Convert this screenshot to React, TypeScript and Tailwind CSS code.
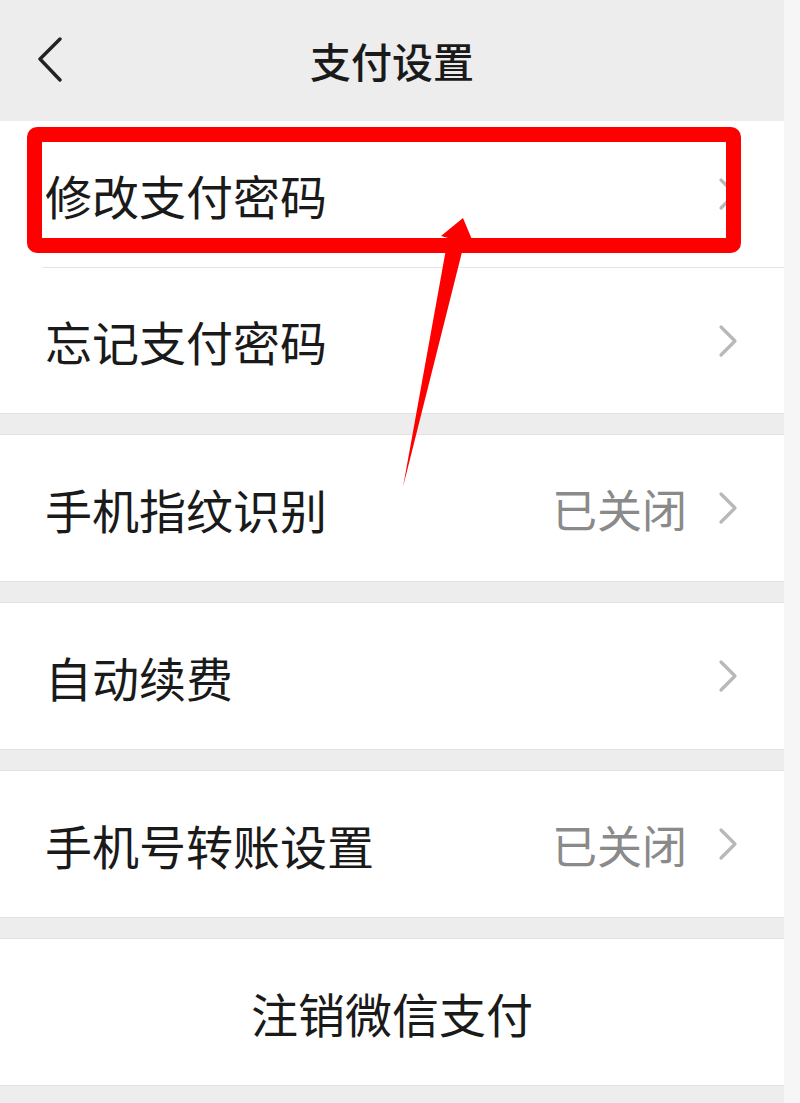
const FONT = { fontFamily: '"Noto Sans CJK SC", "Noto Sans", sans-serif' };

function Chevron() {
  return (
    <svg width="20" height="34" viewBox="0 0 20 34" className="shrink-0">
      <path d="M3 3 L17 17 L3 31" fill="none" stroke="#b8b8b8" strokeWidth="3.2" strokeLinecap="round" strokeLinejoin="round" />
    </svg>
  );
}

function Row({ label, value, arrow = true }: { label: string; value?: string; arrow?: boolean }) {
  return (
    <div className="flex h-[146px] items-center bg-white pl-[45px] pr-[46px]">
      <span className="flex-1 text-[47px] leading-none text-[#1a1a1a]">{label}</span>
      {value && <span className="mr-[31px] text-[45px] leading-none text-[#8a8a8a]">{value}</span>}
      {arrow && <Chevron />}
    </div>
  );
}

function Gap() {
  return <div className="h-[22px] border-y border-[#e2e2e2] bg-[#ededed]" />;
}

export default function App() {
  return (
    <div className="flex min-h-[1103px] w-[800px] bg-[#f6f6f6]" style={FONT}>
      <div className="relative w-[784px] bg-[#ededed]">
        <header className="relative flex h-[121px] items-center justify-center">
          <svg width="30" height="50" viewBox="0 0 30 50" className="absolute left-[32px] top-[34px]">
            <path d="M28 5 L8 25 L28 46" fill="none" stroke="#222" strokeWidth="3.4" strokeLinecap="round" strokeLinejoin="round" />
          </svg>
          <h1 className="text-[41px] font-medium leading-none text-[#1a1a1a]">支付设置</h1>
        </header>

        <div className="bg-white">
          <Row label="修改支付密码" />
          <div className="ml-[42px] h-px bg-[#e5e5e5]" />
          <div className="h-[145px] flex items-center bg-white pl-[45px] pr-[46px]">
            <span className="flex-1 text-[47px] leading-none text-[#1a1a1a]">忘记支付密码</span>
            <Chevron />
          </div>
        </div>
        <Gap />
        <Row label="手机指纹识别" value="已关闭" />
        <Gap />
        <Row label="自动续费" />
        <Gap />
        <Row label="手机号转账设置" value="已关闭" />
        <Gap />
        <div className="flex h-[146px] items-center justify-center bg-white">
          <span className="text-[47px] leading-none text-[#1a1a1a]">注销微信支付</span>
        </div>
        <div className="border-t border-[#e2e2e2]" />

        {/* annotation overlay */}
        <div className="absolute left-[27px] top-[127px] h-[126px] w-[714px] rounded-[10px] border-[15px] border-[#ff0000]" />
        <svg width="784" height="1103" viewBox="0 0 784 1103" className="pointer-events-none absolute left-0 top-0">
          <polygon points="463,218 473,242 464,244 403,487 448,238 441,236" fill="#ff0000" />
        </svg>
      </div>
      <div className="flex-1" />
    </div>
  );
}
